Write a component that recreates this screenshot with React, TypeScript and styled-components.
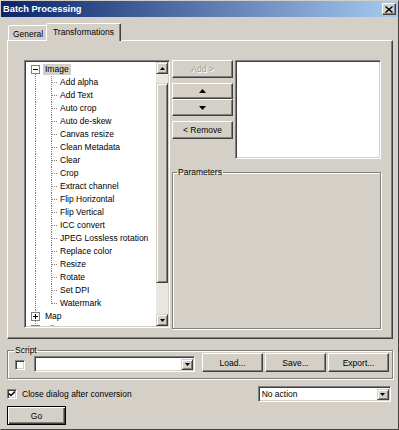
import React from 'react'
import styled, { createGlobalStyle, css } from 'styled-components'

const GlobalStyle = createGlobalStyle`
  html, body { margin: 0; padding: 0; background: #d4d0c8; }
  body {
    font-family: "Liberation Sans", Arial, sans-serif;
    font-size: 8.5px;
    color: #000;
  }
  * { box-sizing: border-box; }
`

const raised = css`
  border: 1px solid;
  border-color: #fff #404040 #404040 #fff;
  box-shadow: inset -1px -1px #808080, inset 1px 1px #d4d0c8;
  background: #d4d0c8;
`
const sunken = css`
  border: 1px solid;
  border-color: #808080 #fff #fff #808080;
  box-shadow: inset 1px 1px #404040, inset -1px -1px #d4d0c8;
  background: #fff;
`

const Window = styled.div`
  width: 399px;
  height: 430px;
  border: 1px solid;
  border-color: #d4d0c8 #404040 #404040 #d4d0c8;
  background: #d4d0c8;
  display: flex;
  flex-direction: column;
  overflow: hidden;
`
const TitleBar = styled.div`
  height: 16px;
  display: flex;
  align-items: center;
  justify-content: space-between;
  padding: 0 2px 0 2px;
  background: linear-gradient(to right, #0a246a, #a6caf0);
`
const Title = styled.span`
  color: #fff;
  font-weight: bold;
  font-size: 9.3px;
`
const CloseBtn = styled.div`
  ${raised};
  width: 14px;
  height: 12px;
  display: flex;
  align-items: center;
  justify-content: center;
`
const Body = styled.div`
  display: flex;
  flex-direction: column;
  padding: 6px 5px 0 6px;
`
const TabStrip = styled.div`
  display: flex;
  align-items: flex-end;
  height: 17px;
  padding-left: 1px;
  position: relative;
  z-index: 1;
`
const Tab = styled.div<{ $active?: boolean; $w: number }>`
  width: ${p => p.$w}px;
  height: ${p => (p.$active ? 18 : 15)}px;
  margin-bottom: ${p => (p.$active ? -1 : 0)}px;
  margin-left: ${p => (p.$active ? -2 : 0)}px;
  background: #d4d0c8;
  border: 1px solid;
  border-bottom: none;
  border-color: #fff #404040 transparent #fff;
  border-radius: 2px 2px 0 0;
  box-shadow: inset -1px 0 #808080;
  display: flex;
  align-items: ${p => (p.$active ? 'flex-start' : 'center')};
  padding-top: ${p => (p.$active ? 3 : 1)}px;
  justify-content: center;
  line-height: 10px;
`
const TabPanel = styled.div`
  width: 386px;
  height: 299px;
  border: 1px solid;
  border-color: #fff #404040 #404040 #fff;
  box-shadow: inset -1px -1px #808080;
  display: flex;
  align-items: flex-start;
  padding: 19px 0 0 16px;
`
const TreeBox = styled.div`
  ${sunken};
  width: 146px;
  height: 268px;
  display: flex;
  padding: 1px;
  overflow: hidden;
`
const TreeList = styled.div`
  flex: 1;
  padding-top: 1px;
  overflow: hidden;
`
const Row = styled.div`
  display: flex;
  align-items: center;
  height: 13px;
  white-space: nowrap;
`
const NodeLabel = styled.span<{ $selected?: boolean }>`
  padding: 0 2px;
  line-height: 11px;
  background: ${p => (p.$selected ? '#d4d0c8' : 'transparent')};
`
const ScrollBar = styled.div`
  width: 12px;
  display: flex;
  flex-direction: column;
`
const ScrollBtn = styled.div`
  height: 12px;
  border: 1px solid;
  border-color: #d4d0c8 #404040 #404040 #d4d0c8;
  box-shadow: inset 1px 1px #fff, inset -1px -1px #808080;
  background: #d4d0c8;
  display: flex;
  align-items: center;
  justify-content: center;
`
const Track = styled.div`
  flex: 1;
  background: #e9e7e3;
  padding-top: 9px;
`
const Thumb = styled.div`
  height: 200px;
  border: 1px solid;
  border-color: #d4d0c8 #404040 #404040 #d4d0c8;
  box-shadow: inset 1px 1px #fff, inset -1px -1px #808080;
  background: #d4d0c8;
`
const RightCol = styled.div`
  margin-left: 2px;
  width: 209px;
  display: flex;
  flex-direction: column;
`
const TopRow = styled.div`
  display: flex;
  gap: 2px;
`
const ButtonCol = styled.div`
  width: 61px;
  display: flex;
  flex-direction: column;
`
const Button = styled.div<{ $h?: number; $w?: number; $gap?: number; $ml?: number; $disabled?: boolean }>`
  ${raised};
  height: ${p => p.$h ?? 19}px;
  width: ${p => (p.$w ? `${p.$w}px` : 'auto')};
  margin-top: ${p => p.$gap ?? 0}px;
  margin-left: ${p => p.$ml ?? 0}px;
  display: flex;
  align-items: center;
  justify-content: center;
  color: ${p => (p.$disabled ? '#a09c94' : '#000')};
  text-shadow: ${p => (p.$disabled ? '1px 1px #fff' : 'none')};
`
const DefaultButton = styled.div`
  width: 59px;
  height: 19px;
  margin-top: 4px;
  border: 1px solid #000;
  box-shadow: inset 1px 1px #fff, inset -1px -1px #404040, inset -2px -2px #808080;
  background: #d4d0c8;
  display: flex;
  align-items: center;
  justify-content: center;
`
const ListBox = styled.div`
  ${sunken};
  width: 146px;
  height: 99px;
`
const GroupBox = styled.fieldset<{ $w: number; $h: number; $top: number; $indent: number }>`
  width: ${p => p.$w}px;
  height: ${p => p.$h}px;
  margin: ${p => p.$top}px 0 0 0;
  padding: 0;
  min-inline-size: 0;
  border: 1px solid #808080;
  box-shadow: inset 1px 1px #fff, 1px 1px #fff;
  legend {
    margin-left: ${p => p.$indent}px;
    padding: 0 1px;
    line-height: 10px;
    font-size: 8.5px;
  }
`
const ScriptRow = styled.div`
  display: flex;
  align-items: flex-end;
  margin-top: -2px;
  padding-left: 7px;
  gap: 2px;
`
const CheckBox = styled.div<{ $mb?: number }>`
  ${sunken};
  width: 10px;
  height: 10px;
  margin-bottom: ${p => p.$mb ?? 0}px;
  display: flex;
  align-items: center;
  justify-content: center;
  flex-shrink: 0;
`
const Combo = styled.div<{ $w: number; $ml?: number }>`
  ${sunken};
  width: ${p => p.$w}px;
  height: 16px;
  margin-left: ${p => p.$ml ?? 0}px;
  display: flex;
  align-items: stretch;
  padding: 2px 1px 1px 2px;
`
const ComboText = styled.span`
  flex: 1;
  line-height: 11px;
  padding-left: 1px;
`
const ComboArrow = styled(ScrollBtn)`
  width: 12px;
  height: auto;
`
const BottomRow = styled.div`
  display: flex;
  align-items: center;
  margin-top: 7px;
  height: 16px;
`
const CheckLabel = styled.span`
  margin-left: 5px;
`

const TriDown = ({ w = 5, h = 3 }: { w?: number; h?: number }) => (
  <svg width={w} height={h}>
    <polygon points={`0,0 ${w},0 ${w / 2},${h}`} fill="#000" />
  </svg>
)
const TriUp = ({ w = 5, h = 3 }: { w?: number; h?: number }) => (
  <svg width={w} height={h}>
    <polygon points={`0,${h} ${w},${h} ${w / 2},0`} fill="#000" />
  </svg>
)

type GuideKind = 'rootOpen' | 'rootClosed' | 'rootLast' | 'child' | 'childLast'

const dot = { stroke: '#808080', strokeDasharray: '1 1', shapeRendering: 'crispEdges' as const }

// tree connector lines for one row
const Guides = ({ kind }: { kind: GuideKind }) => {
  if (kind === 'child' || kind === 'childLast') {
    return (
      <svg width={32} height={13}>
        <line x1={9.5} y1={0} x2={9.5} y2={13} {...dot} />
        <line x1={25.5} y1={0} x2={25.5} y2={kind === 'child' ? 13 : 7} {...dot} />
        <line x1={26} y1={6.5} x2={32} y2={6.5} {...dot} />
      </svg>
    )
  }
  return (
    <svg width={17} height={13}>
      {kind !== 'rootOpen' && <line x1={9.5} y1={0} x2={9.5} y2={2} {...dot} />}
      {kind !== 'rootLast' && <line x1={9.5} y1={11} x2={9.5} y2={13} {...dot} />}
      <rect x={5.5} y={2.5} width={8} height={8} fill="#fff" stroke="#808080" shapeRendering="crispEdges" />
      <line x1={7} y1={6.5} x2={12} y2={6.5} stroke="#000" shapeRendering="crispEdges" />
      {kind !== 'rootOpen' && (
        <line x1={9.5} y1={4} x2={9.5} y2={9} stroke="#000" shapeRendering="crispEdges" />
      )}
    </svg>
  )
}

const imageOps = [
  'Add alpha',
  'Add Text',
  'Auto crop',
  'Auto de-skew',
  'Canvas resize',
  'Clean Metadata',
  'Clear',
  'Crop',
  'Extract channel',
  'Flip Horizontal',
  'Flip Vertical',
  'ICC convert',
  'JPEG Lossless rotation',
  'Replace color',
  'Resize',
  'Rotate',
  'Set DPI',
  'Watermark',
]

const App = () => {
  return (
    <>
      <GlobalStyle />
      <Window>
        <TitleBar>
          <Title>Batch Processing</Title>
          <CloseBtn>
            <svg width={8} height={7}>
              <path d="M0.5 0.5 L7.5 6.5 M7.5 0.5 L0.5 6.5" stroke="#000" strokeWidth={1.4} />
            </svg>
          </CloseBtn>
        </TitleBar>
        <Body>
          <TabStrip>
            <Tab $w={40}>General</Tab>
            <Tab $w={75} $active>Transformations</Tab>
          </TabStrip>
          <TabPanel>
            <TreeBox>
              <TreeList>
                <Row>
                  <Guides kind="rootOpen" />
                  <NodeLabel $selected>Image</NodeLabel>
                </Row>
                {imageOps.map((op, i) => (
                  <Row key={op}>
                    <Guides kind={i === imageOps.length - 1 ? 'childLast' : 'child'} />
                    <NodeLabel>{op}</NodeLabel>
                  </Row>
                ))}
                <Row>
                  <Guides kind="rootClosed" />
                  <NodeLabel>Map</NodeLabel>
                </Row>
                <Row>
                  <Guides kind="rootLast" />
                  <NodeLabel>File</NodeLabel>
                </Row>
              </TreeList>
              <ScrollBar>
                <ScrollBtn>
                  <TriUp />
                </ScrollBtn>
                <Track>
                  <Thumb />
                </Track>
                <ScrollBtn>
                  <TriDown />
                </ScrollBtn>
              </ScrollBar>
            </TreeBox>
            <RightCol>
              <TopRow>
                <ButtonCol>
                  <Button $h={18} $disabled>Add &gt;</Button>
                  <Button $h={16} $gap={5}>
                    <TriUp w={7} h={4} />
                  </Button>
                  <Button $h={17}>
                    <TriDown w={7} h={4} />
                  </Button>
                  <Button $h={18} $gap={5}>&lt; Remove</Button>
                </ButtonCol>
                <ListBox />
              </TopRow>
              <GroupBox $w={209} $h={162} $top={8} $indent={4}>
                <legend>Parameters</legend>
              </GroupBox>
            </RightCol>
          </TabPanel>
          <GroupBox $w={386} $h={34} $top={6} $indent={6}>
            <legend>Script</legend>
            <ScriptRow>
              <CheckBox $mb={2} />
              <Combo $w={161} $ml={7}>
                <ComboText />
                <ComboArrow>
                  <TriDown />
                </ComboArrow>
              </Combo>
              <Button $w={61} $ml={5}>Load...</Button>
              <Button $w={61}>Save...</Button>
              <Button $w={61}>Export...</Button>
            </ScriptRow>
          </GroupBox>
          <BottomRow>
            <CheckBox>
              <svg width={8} height={8}>
                <path d="M1 3.5 L3 5.5 L7 1.5" stroke="#000" strokeWidth={1.5} fill="none" />
              </svg>
            </CheckBox>
            <CheckLabel>Close dialog after conversion</CheckLabel>
            <Combo $w={133} $ml={126}>
              <ComboText>No action</ComboText>
              <ComboArrow>
                <TriDown />
              </ComboArrow>
            </Combo>
          </BottomRow>
          <DefaultButton>Go</DefaultButton>
        </Body>
      </Window>
    </>
  )
}

export default App
